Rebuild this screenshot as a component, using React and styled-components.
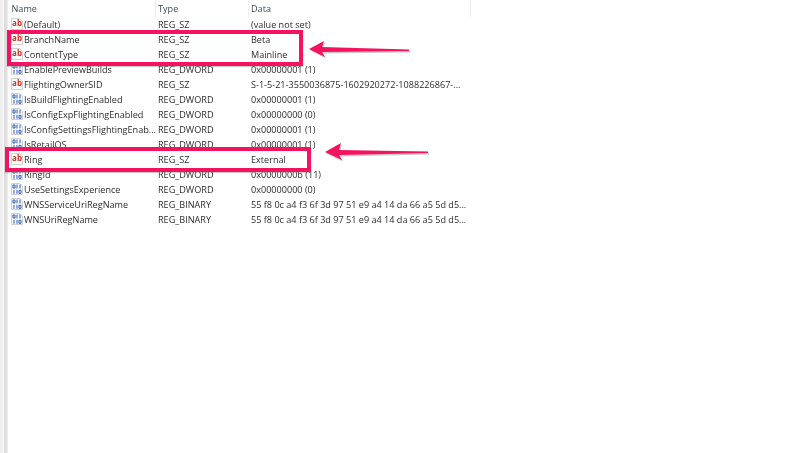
import styled, { createGlobalStyle } from "styled-components";

const GlobalStyle = createGlobalStyle`
  html, body {
    margin: 0;
    padding: 0;
    background: #ffffff;
  }
  body {
    width: 800px;
    height: 453px;
    overflow: hidden;
    font-family: "Open Sans", "Noto Sans", "Liberation Sans", sans-serif;
  }
`;

const rows = [
  { name: "(Default)", kind: "sz", type: "REG_SZ", data: "(value not set)" },
  { name: "BranchName", kind: "sz", type: "REG_SZ", data: "Beta" },
  { name: "ContentType", kind: "sz", type: "REG_SZ", data: "Mainline" },
  { name: "EnablePreviewBuilds", kind: "bin", type: "REG_DWORD", data: "0x00000001 (1)" },
  { name: "FlightingOwnerSID", kind: "sz", type: "REG_SZ", data: "S-1-5-21-3550036875-1602920272-1088226867-..." },
  { name: "IsBuildFlightingEnabled", kind: "bin", type: "REG_DWORD", data: "0x00000001 (1)" },
  { name: "IsConfigExpFlightingEnabled", kind: "bin", type: "REG_DWORD", data: "0x00000000 (0)" },
  { name: "IsConfigSettingsFlightingEnab...", kind: "bin", type: "REG_DWORD", data: "0x00000001 (1)" },
  { name: "IsRetailOS", kind: "bin", type: "REG_DWORD", data: "0x00000001 (1)" },
  { name: "Ring", kind: "sz", type: "REG_SZ", data: "External" },
  { name: "RingId", kind: "bin", type: "REG_DWORD", data: "0x0000000b (11)" },
  { name: "UseSettingsExperience", kind: "bin", type: "REG_DWORD", data: "0x00000000 (0)" },
  { name: "WNSServiceUriRegName", kind: "bin", type: "REG_BINARY", data: "55 f8 0c a4 f3 6f 3d 97 51 e9 a4 14 da 66 a5 5d d5..." },
  { name: "WNSUriRegName", kind: "bin", type: "REG_BINARY", data: "55 f8 0c a4 f3 6f 3d 97 51 e9 a4 14 da 66 a5 5d d5..." },
];

const SzIcon = () => (
  <IconSvg viewBox="0 0 12 12">
    <path d="M.5.5h8L11.5 3v8.5H.5z" fill="#fff" stroke="#c4c4c4" strokeWidth=".8" />
    <text x="6" y="7.6" textAnchor="middle" fontSize="8" fontWeight="700" fill="#d0321f" fontFamily="Open Sans, sans-serif">
      ab
    </text>
  </IconSvg>
);

// little blue 0 and 1 digits, two rows: 011 / 110
const BinIcon = () => (
  <IconSvg viewBox="0 0 12 12">
    <path d="M.5.5h8L11.5 3v8.5H.5z" fill="#fff" stroke="#c4c4c4" strokeWidth=".8" />
    <g fill="none" stroke="#2459bd" strokeWidth="1">
      <path d="M2 2h2v3H2z" />
      <path d="M6 1.5v4M9 1.5v4" />
      <path d="M3 6.8v4M6 6.8v4" />
      <path d="M8 7.3h2v3H8z" />
    </g>
  </IconSvg>
);

const Arrow = ({ width, height, points, ...rest }) => (
  <ArrowSvg width={width} height={height} viewBox={`0 0 ${width} ${height}`} {...rest}>
    <polygon points={points} fill="#9a9a9a" opacity=".55" transform="translate(1 1.5)" />
    <polygon points={points} fill="#f5135f" />
  </ArrowSvg>
);

const App = () => {
  return (
    <Page>
      <GlobalStyle />
      <Gutter />
      <Table>
        <HeaderRow>
          <HeadCell $width={148} $pad={3.5}>Name</HeadCell>
          <HeadCell $width={93} $pad={2}>Type</HeadCell>
          <HeadCell $width={222} $pad={2}>Data</HeadCell>
        </HeaderRow>
        {rows.map((row) => (
          <Row key={row.name}>
            <NameCell>
              {row.kind === "sz" ? <SzIcon /> : <BinIcon />}
              <span>{row.name}</span>
            </NameCell>
            <TypeCell>{row.type}</TypeCell>
            <DataCell>{row.data}</DataCell>
          </Row>
        ))}
      </Table>

      <Highlight $left={7} $top={30} $width={296} $height={36} />
      <Highlight $left={5} $top={147} $width={306} $height={25} />
      <Arrow
        width={104}
        height={20}
        style={{ left: 308, top: 40 }}
        points="1,9 16,1 14,7 101,9.5 101,11 14,12 17,17"
      />
      <Arrow
        width={106}
        height={20}
        style={{ left: 324, top: 142 }}
        points="1,10 17,1 15,8 104,9.5 104,11 15,13 18,18"
      />
    </Page>
  );
};

export default App;

const Page = styled.div`
  position: relative;
  display: flex;
  width: 800px;
  height: 453px;
  overflow: hidden;
  background: #ffffff;
`;

const Gutter = styled.div`
  flex: 0 0 8px;
  height: 100%;
  background: linear-gradient(
    90deg,
    #efefef 0,
    #efefef 3px,
    #fbfbfb 3px,
    #fbfbfb 4px,
    #d9d9d9 4px,
    #e2e2e2 7px,
    #f4f4f4 8px
  );
`;

const Table = styled.div`
  display: flex;
  flex-direction: column;
  font-size: 9.1px;
  color: #2c2c2c;
  filter: blur(0.25px);
`;

const HeaderRow = styled.div`
  display: flex;
  height: 17px;
`;

const HeadCell = styled.div`
  box-sizing: border-box;
  width: ${(props) => props.$width}px;
  height: 17px;
  line-height: 18px;
  padding-left: ${(props) => props.$pad}px;
  border-right: 1px solid #ececec;
  color: #3f4a58;
`;

const Row = styled.div`
  display: flex;
  align-items: center;
  height: 15px;
  white-space: nowrap;
`;

const NameCell = styled.div`
  display: flex;
  align-items: center;
  gap: 1.5px;
  width: 148px;
  padding-left: 2.5px;
  box-sizing: border-box;
`;

const IconSvg = styled.svg`
  flex: 0 0 12px;
  width: 12px;
  height: 12px;
  margin-top: -2px;
`;

const TypeCell = styled.div`
  width: 93px;
  padding-left: 2px;
  box-sizing: border-box;
`;

const DataCell = styled.div`
  padding-left: 2px;
`;

const Highlight = styled.div`
  position: absolute;
  box-sizing: border-box;
  left: ${(props) => props.$left}px;
  top: ${(props) => props.$top}px;
  width: ${(props) => props.$width}px;
  height: ${(props) => props.$height}px;
  border: 4px solid #f5135f;
  box-shadow: 0 1px 1px rgba(120, 120, 120, 0.4);
`;

const ArrowSvg = styled.svg`
  position: absolute;
`;
